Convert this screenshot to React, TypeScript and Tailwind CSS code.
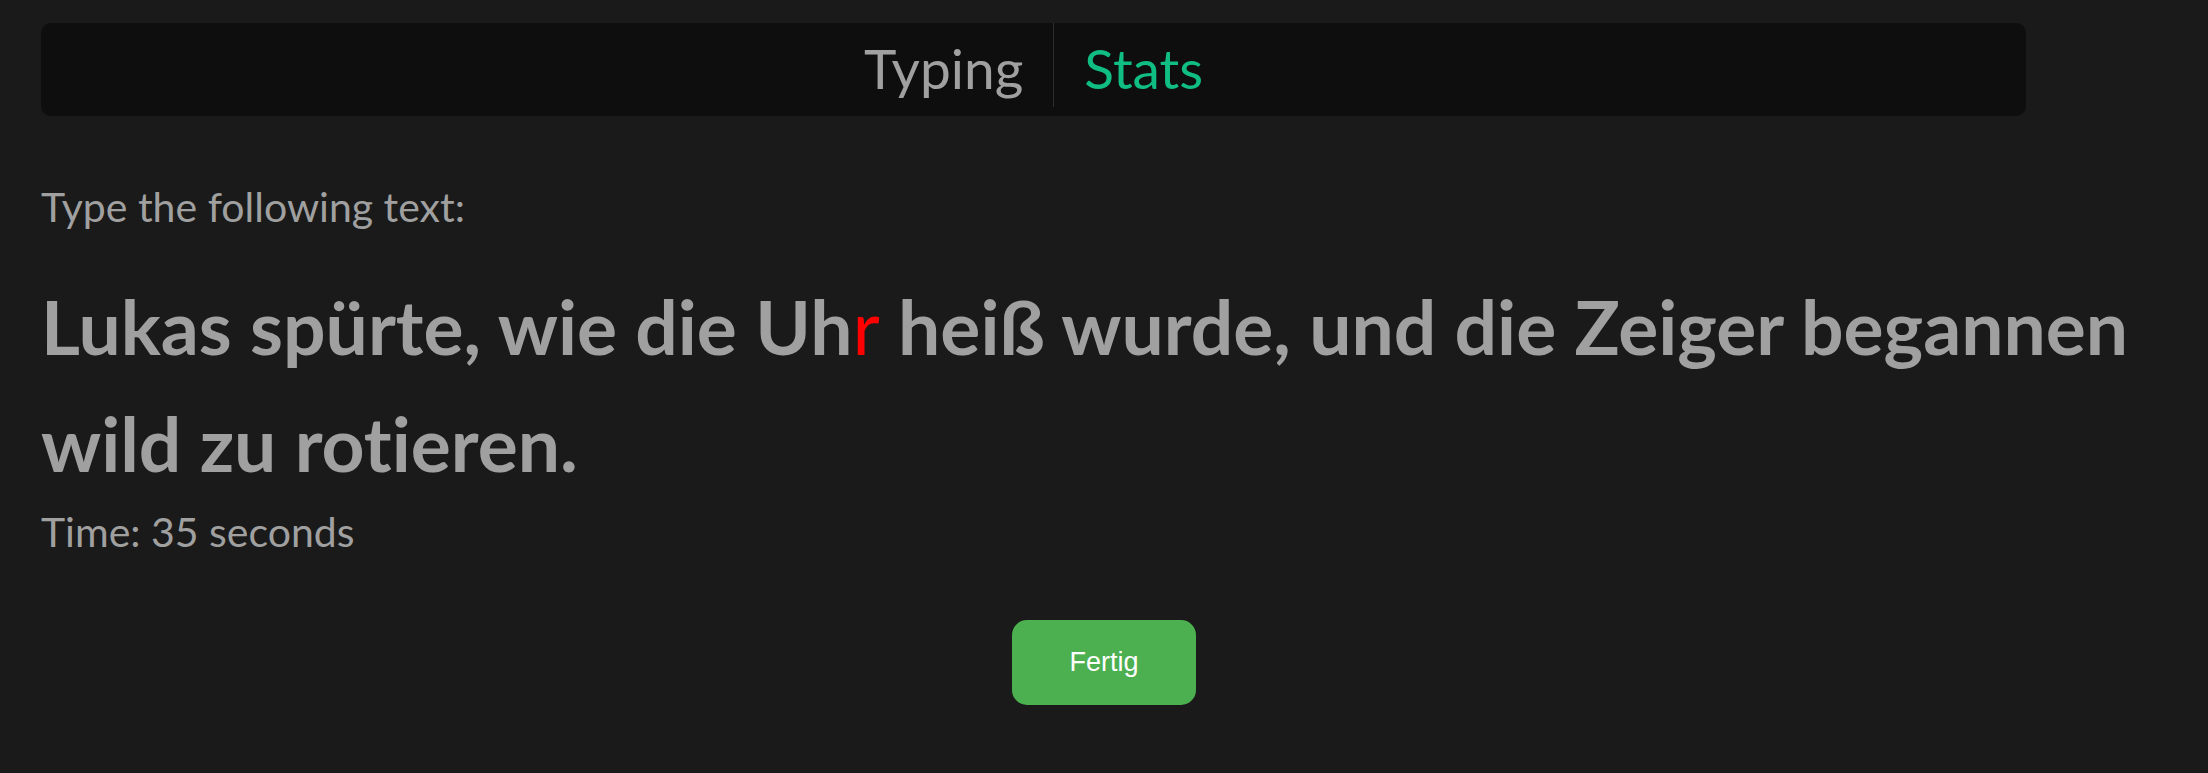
import React from "react";

export default function App() {
  return (
    <div className="flex min-h-screen w-full flex-col bg-[#1a1a1a] pt-[23px] font-['Lato',sans-serif] text-[#a0a0a0] [font-variant-ligatures:none]">
      <nav className="ml-[41px] flex h-[93px] w-[1985px] items-start justify-center rounded-[10px] bg-[#0e0e0e]">
        <button className="h-[84px] border-r border-[#2e2e2e] px-[30px] pt-[6px] text-[55px] leading-[78px] text-[#a0a0a0]">
          Typing
        </button>
        <button className="h-[84px] px-[30px] pt-[6px] text-[55px] leading-[78px] text-[#10bd83]">
          Stats
        </button>
      </nav>

      <main className="flex flex-col px-[41px]">
        <p className="mt-[66px] text-[41px] leading-[49px]">Type the following text:</p>
        <p className="mt-[37px] text-[75px] font-bold leading-[117px]">
          Lukas spürte, wie die Uh<span className="font-normal text-[#ff0000]">r</span> heiß wurde, und die Zeiger begannen wild zu
          rotieren.
        </p>
        <p className="mt-[5px] text-[41px] leading-[49px]">Time: 35 seconds</p>
        <div className="mt-[64px] flex justify-center">
          <button className="flex h-[85px] w-[184px] items-center justify-center rounded-[15px] bg-[#4caf50] font-['Liberation_Sans',Arial,sans-serif] text-[27px] text-white">
            Fertig
          </button>
        </div>
      </main>
    </div>
  );
}
